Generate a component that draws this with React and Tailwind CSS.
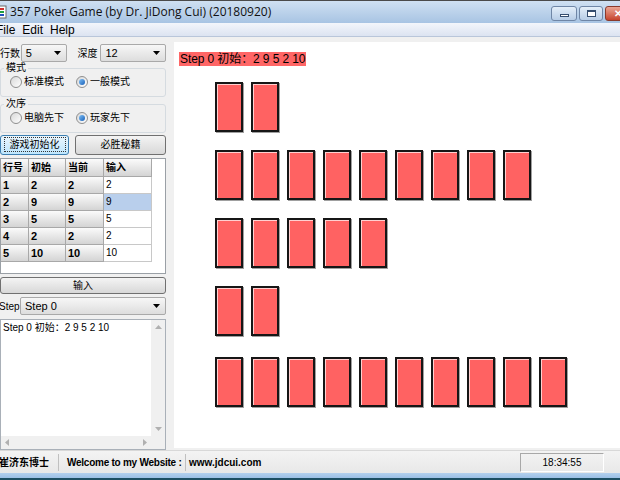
import React from "react";

const Combo = ({ value, className = "" }) => (
  <div className={`h-[18px] border border-[#a9a9a9] rounded-[2px] bg-linear-to-b from-[#f7f7f7] to-[#dddddd] flex items-center pl-[4px] pr-[5px] text-[11px] whitespace-nowrap ${className}`}>
    <span className="flex-1">{value}</span>
    <svg width="7" height="4" viewBox="0 0 7 4"><path d="M0 0h7L3.5 4z" fill="#000" /></svg>
  </div>
);

const Radio = ({ checked, label }) => (
  <div className="flex items-center gap-[2px] whitespace-nowrap">
    <span className="w-[12px] h-[12px] rounded-full border border-[#8f8f8f] bg-linear-to-br from-[#d8d8d8] to-white flex items-center justify-center">
      {checked && <span className="w-[6px] h-[6px] rounded-full bg-linear-to-br from-[#7fc0f5] to-[#1460b8]" />}
    </span>
    <span className="text-[10px] leading-[14px]">{label}</span>
  </div>
);

const Group = ({ title, children }) => (
  <fieldset className="h-[35px] border border-[#d5dbe0] rounded-[3px] ml-[1px] pl-[9px] pr-[8px] pb-[7px] pt-0">
    <legend className="px-[2px] ml-[-6px] leading-[12px] text-[10px]">{title}</legend>
    <div className="flex items-center h-[14px] mt-[1px]">{children}</div>
  </fieldset>
);

const Card = () => (
  <div className="w-[28px] h-[50px] border-2 border-[#161616] bg-[#ff6262] shadow-[inset_1px_1px_0_#ffd0d0,1px_1px_0_#a0a0a0]" />
);

const HeadCell = ({ children, w, cjk }) => (
  <div className={`${w} h-full border-r border-b border-[#a8a8a8] bg-linear-to-b from-[#fbfbfb] to-[#d4d4d4] flex items-center pl-[2px] font-bold whitespace-nowrap ${cjk ? "text-[10px]" : "text-[11px]"}`}>{children}</div>
);

export default function App() {
  const rows = [
    [1, 2, 2, 2],
    [2, 9, 9, 9],
    [3, 5, 5, 5],
    [4, 2, 2, 2],
    [5, 10, 10, 10],
  ];
  const counts = [2, 9, 5, 2, 10];
  return (
    <div className="w-[620px] h-[480px] overflow-hidden bg-[#f0f0f0] flex flex-col font-['Liberation_Sans','Noto_Sans_CJK_SC',sans-serif] text-[12px] text-black">
      {/* title bar */}
      <div className="h-[23px] shrink-0 border-t border-[#4a4a4a] bg-linear-to-b from-[#cfe0f2] to-[#a8c4e3] flex items-start">
        <svg className="ml-[-7px] mt-[4px]" width="14" height="14" viewBox="0 0 14 14">
          <rect x="1" y="1" width="12" height="12" fill="#ffffff" stroke="#6a6a6a" />
          <rect x="3" y="3" width="8" height="2" fill="#d03030" />
          <rect x="3" y="6" width="8" height="2" fill="#20a040" />
          <rect x="3" y="9" width="8" height="2" fill="#2050c0" />
        </svg>
        <span className="ml-[3px] mt-[3px] font-['Open_Sans','Noto_Sans_CJK_SC',sans-serif] text-[12px] leading-[16px] text-[#111] whitespace-nowrap">357 Poker Game (by Dr. JiDong Cui) (20180920)</span>
        <div className="ml-auto mt-[5px] flex gap-[2px] mr-[-28px]">
          <div className="w-[26px] h-[15px] rounded-[3px] border border-[#6f86a6] bg-linear-to-b from-[#e4eef9] to-[#b7cde6] flex items-center justify-center">
            <span className="w-[9px] h-[3px] mt-[3px] border border-[#354d6e] bg-white" />
          </div>
          <div className="w-[24px] h-[15px] rounded-[3px] border border-[#6f86a6] bg-linear-to-b from-[#e4eef9] to-[#b7cde6] flex items-center justify-center">
            <span className="w-[9px] h-[7px] border border-[#354d6e] border-t-2 bg-white" />
          </div>
          <div className="w-[43px] h-[15px] rounded-[3px] border border-[#8a3a2c] bg-linear-to-b from-[#e9a594] to-[#c5422c] flex items-center justify-start pl-[8px] text-white font-bold text-[10px] leading-none">
            ✕
          </div>
        </div>
      </div>
      {/* menu bar */}
      <div className="h-[14px] shrink-0 bg-linear-to-b from-[#f3f6fb] to-[#dce3f1] border-b border-[#b9c6da] flex items-center gap-[7px] ml-[-4px] text-[12px] leading-[14px] whitespace-nowrap">
        <span>File</span>
        <span>Edit</span>
        <span>Help</span>
      </div>
      {/* main */}
      <div className="flex-1 flex min-h-0">
        {/* left panel */}
        <div className="w-[167px] shrink-0 flex flex-col pt-[7px] ml-[-1px]">
          <div className="flex items-center h-[18px] whitespace-nowrap">
            <span className="w-[22px] pl-[1px] text-[10px]">行数</span>
            <Combo value="5" className="w-[46px]" />
            <span className="ml-[11px] w-[23px] text-[10px]">深度</span>
            <Combo value="12" className="w-[66px]" />
          </div>
          <div>
            <Group title="模式">
              <div className="w-[66px]"><Radio label="标准模式" /></div>
              <Radio checked label="一般模式" />
            </Group>
          </div>
          <div className="mt-[1px]">
            <Group title="次序">
              <div className="w-[66px]"><Radio label="电脑先下" /></div>
              <Radio checked label="玩家先下" />
            </Group>
          </div>
          <div className="flex mt-[2px] h-[20px] gap-[6px] text-[10px] whitespace-nowrap">
            <div className="w-[69px] ml-[1px] rounded-[3px] border border-[#3c7fb1] bg-linear-to-b from-[#eaf6fd] to-[#bee6fd] flex items-center justify-center">
              <span className="border border-dotted border-[#333] px-[5px] leading-[13px]">游戏初始化</span>
            </div>
            <div className="flex-1 rounded-[3px] border border-[#707070] bg-linear-to-b from-[#f4f4f4] to-[#d8d8d8] flex items-center justify-center">必胜秘籍</div>
          </div>
          {/* grid */}
          <div className="mt-[3px] h-[116px] border border-[#9aa0a6] bg-white ml-[1px]">
            <div className="flex h-[18px]">
              <HeadCell w="w-[28px]" cjk>行号</HeadCell>
              <HeadCell w="w-[37px]" cjk>初始</HeadCell>
              <HeadCell w="w-[38px]" cjk>当前</HeadCell>
              <HeadCell w="w-[48px]" cjk>输入</HeadCell>
            </div>
            {rows.map((r, i) => (
              <div key={i} className="flex h-[17px] text-[11px]">
                <HeadCell w="w-[28px]">{r[0]}</HeadCell>
                <HeadCell w="w-[37px]">{r[1]}</HeadCell>
                <HeadCell w="w-[38px]">{r[2]}</HeadCell>
                <div className={`w-[48px] h-full border-r border-b border-[#c8c8c8] flex items-center pl-[2px] text-[10px] ${i === 1 ? "bg-[#b9cfec]" : "bg-white"}`}>{r[3]}</div>
              </div>
            ))}
          </div>
          <div className="mt-[3px] h-[18px] ml-[1px] rounded-[3px] border border-[#707070] bg-linear-to-b from-[#f4f4f4] to-[#d8d8d8] flex items-center justify-center text-[10px]">输入</div>
          <div className="mt-[3px] flex items-center h-[18px]">
            <span className="w-[21px] text-[10px]">Step</span>
            <Combo value="Step 0" className="flex-1" />
          </div>
          {/* text area */}
          <div className="mt-[4px] h-[131px] ml-[1px] border border-[#a9b0b8] bg-white flex flex-col">
            <div className="flex-1 flex min-h-0">
              <div className="flex-1 pl-[2px] pt-[1px] text-[10px] leading-[14px] whitespace-nowrap">Step 0 初始：2 9 5 2 10</div>
              <div className="w-[14px] bg-[#f0f0f0] flex flex-col items-center justify-between py-[5px]">
                <svg width="7" height="4" viewBox="0 0 7 4"><path d="M0 4h7L3.5 0z" fill="#b0b0b0" /></svg>
                <svg width="7" height="4" viewBox="0 0 7 4"><path d="M0 0h7L3.5 4z" fill="#b0b0b0" /></svg>
              </div>
            </div>
            <div className="h-[13px] flex">
              <div className="flex-1 bg-[#f0f0f0] flex items-center justify-between px-[4px]">
                <svg width="4" height="7" viewBox="0 0 4 7"><path d="M4 0v7L0 3.5z" fill="#b0b0b0" /></svg>
                <svg width="4" height="7" viewBox="0 0 4 7"><path d="M0 0v7L4 3.5z" fill="#b0b0b0" /></svg>
              </div>
              <div className="w-[14px] bg-[#f0f0f0]" />
            </div>
          </div>
        </div>
        {/* canvas */}
        <div className="ml-[8px] mt-[5px] mb-[2px] flex-1 bg-white pt-[10px] pl-[5px] flex flex-col">
          <div className="self-start bg-[#ff6666] px-[1px] h-[14px] leading-[14px] text-[12px] tracking-[-0.1px] whitespace-nowrap">Step 0 初始：2 9 5 2 10</div>
          <div className="flex flex-col gap-[18px] mt-[16px] ml-[36px]">
            {counts.map((c, i) => (
              <div key={i} className={`flex gap-[8px] ${i === 4 ? "mt-[3px]" : ""}`}>
                {Array.from({ length: c }).map((_, j) => <Card key={j} />)}
              </div>
            ))}
          </div>
        </div>
      </div>
      {/* status bar */}
      <div className="h-[23px] shrink-0 border-t border-[#d8d8d8] bg-linear-to-b from-[#f3f3f3] to-[#e8e8e8] flex items-center text-[10px] font-bold whitespace-nowrap">
        <span className="ml-[-1px] w-[59px] text-[10px]">崔济东博士</span>
        <span className="h-[17px] border-l border-[#c0c0c0]" />
        <span className="ml-[8px] w-[118px] tracking-[-0.25px]">Welcome to my Website :</span>
        <span className="h-[17px] border-l border-[#c0c0c0]" />
        <span className="ml-[3px]">www.jdcui.com</span>
        <div className="ml-auto mr-[16px] w-[84px] h-[19px] border border-[#a8a8a8] border-r-white border-b-white flex items-center justify-center font-normal">18:34:55</div>
      </div>
      {/* taskbar edge */}
      <div className="h-[7px] shrink-0 bg-linear-to-b from-[#b3d0ee] to-[#9cc0e6] border-b-2 border-[#1d4f63]" />
    </div>
  );
}
